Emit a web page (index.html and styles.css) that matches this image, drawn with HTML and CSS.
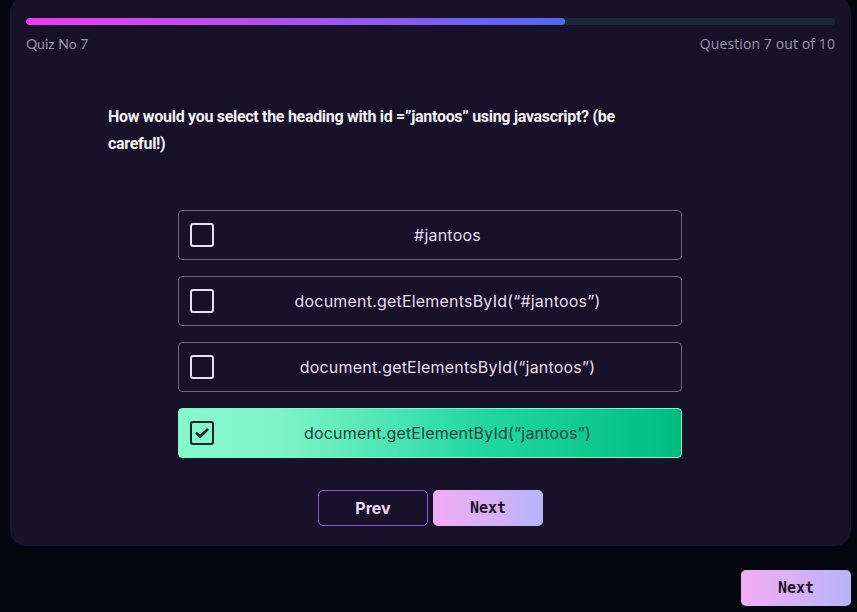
FILE: index.html
```html
<!DOCTYPE html>
<html>
<head>
<meta charset="utf-8">
<link rel="stylesheet" href="styles.css">
</head>
<body>
<div class="page">
  <div class="card">
    <div class="progress"><div class="progress-fill" style="width:66.6%"></div></div>
    <div class="meta">
      <span class="quiz-no">Quiz No 7</span>
      <span class="q-count">Question 7 out of 10</span>
    </div>
    <div class="question">How would you select the heading with id =”jantoos” using javascript? (be careful!)</div>
    <div class="options">
      <div class="option"><span class="box"></span><span class="opt-text">#jantoos</span></div>
      <div class="option"><span class="box"></span><span class="opt-text">document.getElementsById(“#jantoos”)</span></div>
      <div class="option"><span class="box"></span><span class="opt-text">document.getElementsById(“jantoos”)</span></div>
      <div class="option selected"><span class="box checked"><svg viewBox="0 0 24 24" width="18" height="18"><path d="M5 12.5l4.5 4.5L19 7.5" fill="none" stroke="#14202a" stroke-width="3.6" stroke-linecap="round" stroke-linejoin="round"/></svg></span><span class="opt-text">document.getElementById(“jantoos”)</span></div>
    </div>
    <div class="nav">
      <button class="btn prev">Prev</button>
      <button class="btn next">Next</button>
    </div>
  </div>
  <div class="footer">
    <button class="btn next big">Next</button>
  </div>
</div>
</body>
</html>
```
FILE: styles.css
```css
html, body { margin: 0; padding: 0; }
body {
  background: #05050f;
  font-family: "Inter", "Liberation Sans", sans-serif;
  overflow: hidden;
}
.page { display: flex; flex-direction: column; width: 857px; height: 612px; }
.card {
  margin: -4px 6px 0 10px;
  height: 550px;
  box-sizing: border-box;
  background: #17112a;
  border-radius: 16px;
  padding: 22px 16px 0 16px;
  display: flex;
  flex-direction: column;
}
.progress {
  height: 7px;
  border-radius: 4px;
  background: #1b2838;
  overflow: hidden;
}
.progress-fill {
  height: 100%;
  border-radius: 4px;
  background: linear-gradient(90deg, #ec3bf0 0%, #b54ef0 45%, #4e6af5 100%);
}
.meta {
  display: flex;
  justify-content: space-between;
  margin-top: 10px;
  font-size: 14px;
  color: #9a96a8;
  line-height: 18px;
}
.quiz-no { font-family: "Lato", sans-serif; }
.q-count { font-family: "Open Sans", sans-serif; letter-spacing: 0.1px; }
.question {
  width: 525px;
  align-self: flex-start;
  margin-left: 82px;
  margin-top: 50px;
  font-family: "Roboto", "Inter", sans-serif;
  font-size: 16px;
  font-weight: 700;
  line-height: 27px;
  color: #f4f2f8;
  letter-spacing: -0.3px;
}
.options {
  align-self: center;
  width: 504px;
  margin-top: 53px;
  margin-right: 1px;
  display: flex;
  flex-direction: column;
  gap: 16px;
}
.option {
  height: 50px;
  box-sizing: border-box;
  border: 1px solid #6a6480;
  border-radius: 4px;
  display: flex;
  align-items: center;
  padding-left: 11px;
  color: #e6dff0;
  font-size: 16px;
  letter-spacing: 0.2px;
}
.box {
  width: 24px; height: 24px;
  box-sizing: border-box;
  border: 2.5px solid #efdcf5;
  border-radius: 3px;
  flex: none;
  display: flex; align-items: center; justify-content: center;
}
.opt-text { flex: 1; text-align: center; }
.option.selected {
  border-color: #86f3cc;
  background: linear-gradient(90deg, #86f8cc 0%, #7ef5c9 20%, #22d8a0 60%, #00bd7e 100%);
  color: #21433a;
}
.box.checked { border-color: #14202a; }
.nav {
  display: flex;
  justify-content: center;
  gap: 5px;
  margin-top: 32px;
}
.btn {
  width: 110px;
  height: 36px;
  box-sizing: border-box;
  border-radius: 5px;
  font-size: 16px;
  font-weight: 700;
  cursor: pointer;
}
.prev {
  background: #17112a;
  border: 1px solid #8a55dc;
  color: #e9dcf5;
  font-family: "Inter", sans-serif;
}
.next {
  border: none;
  background: linear-gradient(90deg, #f2acf5 0%, #d8b0f7 50%, #b6b4f8 100%);
  color: #1a1426;
  font-family: "DejaVu Sans Mono", monospace;
  font-size: 15px;
}
.footer {
  display: flex;
  justify-content: flex-end;
  padding-right: 6px;
  margin-top: 24px;
}
.big { height: 36px; }
```
